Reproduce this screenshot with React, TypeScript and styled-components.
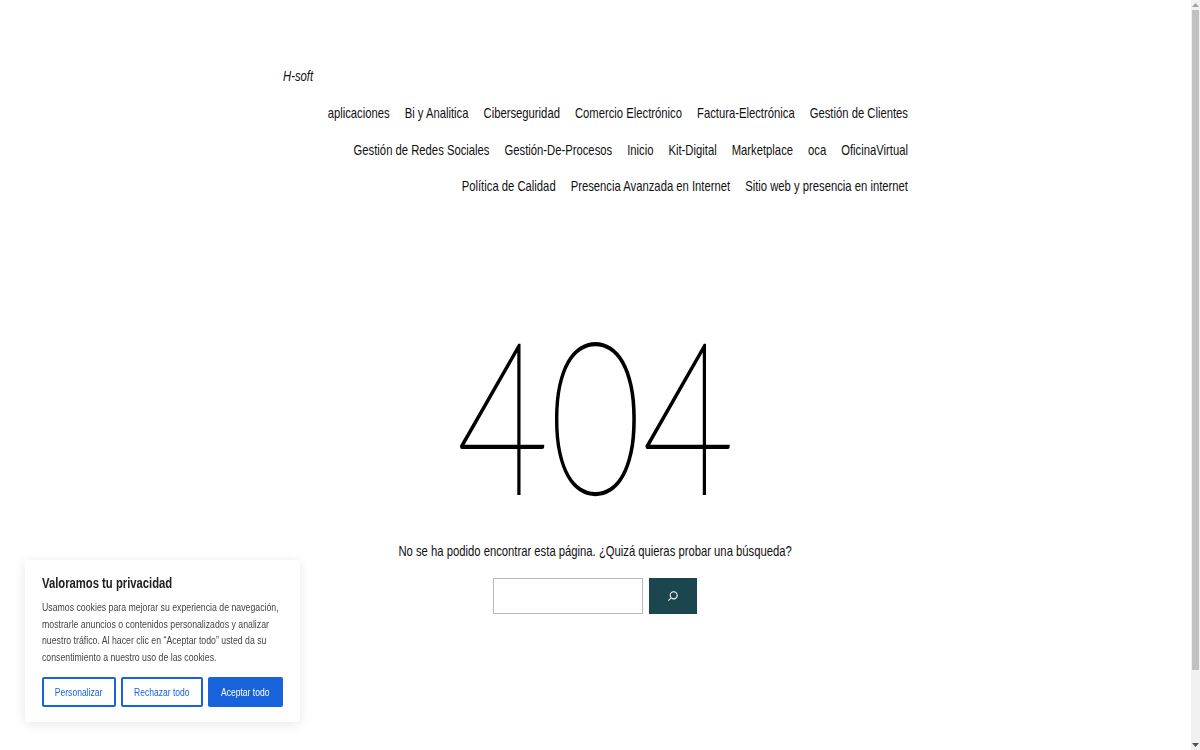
import React from 'react';
import styled, { createGlobalStyle } from 'styled-components';

const NARROW = 0.777;

const GlobalStyle = createGlobalStyle`
    body {
        margin: 0;
        background: #ffffff;
        color: #111111;
        font-family: "Liberation Sans", Arial, sans-serif;
        font-size: 14.5px;
        overflow: hidden;
    }
`;

const Page = styled.div`
    height: 750px;
    box-sizing: border-box;
    padding: 67px 9px 0 0;
`;

const Wrap = styled.div`
    width: 625px;
    margin: 0 auto;
`;

const SiteTitle = styled.div`
    font-style: italic;
    line-height: 18px;
    margin-bottom: 19px;
    transform: scaleX(${NARROW});
    transform-origin: left top;
`;

// no narrow font installed, so the row is laid out wide and squeezed
const Nav = styled.nav`
    display: flex;
    flex-wrap: wrap;
    justify-content: flex-end;
    width: calc(100% / ${NARROW});
    column-gap: ${15 / NARROW}px;
    row-gap: 18px;
    transform: scaleX(${NARROW});
    transform-origin: left top;
`;

const NavLink = styled.a`
    line-height: 18.5px;
`;

const NotFound = styled.main`
    display: flex;
    flex-direction: column;
    align-items: center;
    margin-top: 91.75px;
`;

const BigNumber = styled.h1`
    margin: 0;
    font-family: Lato, sans-serif;
    font-weight: 100;
    font-size: 212px;
    line-height: 250px;
    color: #000000;
    -webkit-text-stroke: 2px #000000;
    transform: scaleX(0.755);
`;

const Hint = styled.p`
    margin: 5px 0 0;
    line-height: 18px;
    white-space: nowrap;
    transform: scaleX(${NARROW});
`;

const SearchRow = styled.form`
    display: flex;
    gap: 6px;
    margin: 18px 1px 0 0;
`;

const SearchInput = styled.input`
    width: 150px;
    height: 36px;
    box-sizing: border-box;
    border: 1px solid #b9b9b9;
    background: #ffffff;
`;

const SearchButton = styled.button`
    width: 48px;
    height: 36px;
    padding: 0;
    border: 0;
    background: #1c464e;
    display: flex;
    align-items: center;
    justify-content: center;
`;

const CookieBox = styled.aside`
    position: fixed;
    left: 25px;
    bottom: 28px;
    width: 275px;
    height: 162px;
    box-sizing: border-box;
    padding: 16px 17px;
    background: #ffffff;
    border-radius: 4px;
    box-shadow: 0 2px 12px rgba(0, 0, 0, 0.1);
`;

const CookieTitle = styled.div`
    font-weight: 700;
    line-height: 14px;
    color: #212121;
    transform: scaleX(${NARROW});
    transform-origin: left top;
`;

const CookieText = styled.p`
    width: calc(100% / ${NARROW});
    margin: 9px 0 12px;
    font-size: 11.25px;
    line-height: 16.6px;
    color: #444444;
    transform: scaleX(${NARROW});
    transform-origin: left top;
`;

const CookieActions = styled.div`
    display: flex;
    gap: 5px;
`;

const CookieButton = styled.button<{ $w: number; $solid?: boolean }>`
    width: ${(p) => p.$w}px;
    height: 30px;
    padding: 0;
    border-radius: 2px;
    border: 2px solid #1863dc;
    background: ${(p) => (p.$solid ? '#1863dc' : '#ffffff')};
    color: ${(p) => (p.$solid ? '#ffffff' : '#1863dc')};
    font-family: inherit;
    font-size: 11px;
`;

const ButtonLabel = styled.span`
    display: inline-block;
    white-space: nowrap;
    transform: scaleX(${NARROW});
`;

const ScrollTrack = styled.div`
    position: fixed;
    top: 0;
    right: 0;
    bottom: 0;
    width: 9px;
    background: #f1f1f1;
`;

const ScrollThumb = styled.div`
    position: absolute;
    top: 10px;
    left: 1px;
    right: 1px;
    height: 660px;
    background: #c1c1c1;
`;

const ScrollArrow = styled.svg<{ $down?: boolean }>`
    position: absolute;
    left: 1px;
    ${(p) => (p.$down ? 'bottom: 3px;' : 'top: 3px;')}
`;

const links = [
    'aplicaciones',
    'Bi y Analitica',
    'Ciberseguridad',
    'Comercio Electrónico',
    'Factura-Electrónica',
    'Gestión de Clientes',
    'Gestión de Redes Sociales',
    'Gestión-De-Procesos',
    'Inicio',
    'Kit-Digital',
    'Marketplace',
    'oca',
    'OficinaVirtual',
    'Política de Calidad',
    'Presencia Avanzada en Internet',
    'Sitio web y presencia en internet',
];

export default function App() {
    return (
        <Page>
            <GlobalStyle />
            <Wrap>
                <SiteTitle>H-soft</SiteTitle>
                <Nav>
                    {links.map((l) => (
                        <NavLink key={l}>{l}</NavLink>
                    ))}
                </Nav>
                <NotFound>
                    <BigNumber>404</BigNumber>
                    <Hint>No se ha podido encontrar esta página. ¿Quizá quieras probar una búsqueda?</Hint>
                    <SearchRow>
                        <SearchInput />
                        <SearchButton type="button" aria-label="Buscar">
                            <svg width="16" height="16" viewBox="0 0 24 24" fill="#ffffff">
                                <path d="M13 5c-3.3 0-6 2.7-6 6 0 1.4.5 2.7 1.3 3.7l-3.8 3.8 1.1 1.1 3.8-3.8c1 .8 2.3 1.3 3.7 1.3 3.3 0 6-2.7 6-6S16.3 5 13 5zm0 10.5c-2.5 0-4.5-2-4.5-4.5s2-4.5 4.5-4.5 4.5 2 4.5 4.5-2 4.5-4.5 4.5z" />
                            </svg>
                        </SearchButton>
                    </SearchRow>
                </NotFound>
            </Wrap>
            <CookieBox>
                <CookieTitle>Valoramos tu privacidad</CookieTitle>
                <CookieText>
                    Usamos cookies para mejorar su experiencia de navegación, mostrarle anuncios o contenidos
                    personalizados y analizar nuestro tráfico. Al hacer clic en “Aceptar todo” usted da su
                    consentimiento a nuestro uso de las cookies.
                </CookieText>
                <CookieActions>
                    <CookieButton $w={74}>
                        <ButtonLabel>Personalizar</ButtonLabel>
                    </CookieButton>
                    <CookieButton $w={83}>
                        <ButtonLabel>Rechazar todo</ButtonLabel>
                    </CookieButton>
                    <CookieButton $w={75} $solid>
                        <ButtonLabel>Aceptar todo</ButtonLabel>
                    </CookieButton>
                </CookieActions>
            </CookieBox>
            <ScrollTrack>
                <ScrollArrow width="7" height="4" viewBox="0 0 7 4" fill="#a3a3a3">
                    <path d="M3.5 0L7 4H0z" />
                </ScrollArrow>
                <ScrollThumb />
                <ScrollArrow $down width="7" height="4" viewBox="0 0 7 4" fill="#505050">
                    <path d="M0 0h7L3.5 4z" />
                </ScrollArrow>
            </ScrollTrack>
        </Page>
    );
}
